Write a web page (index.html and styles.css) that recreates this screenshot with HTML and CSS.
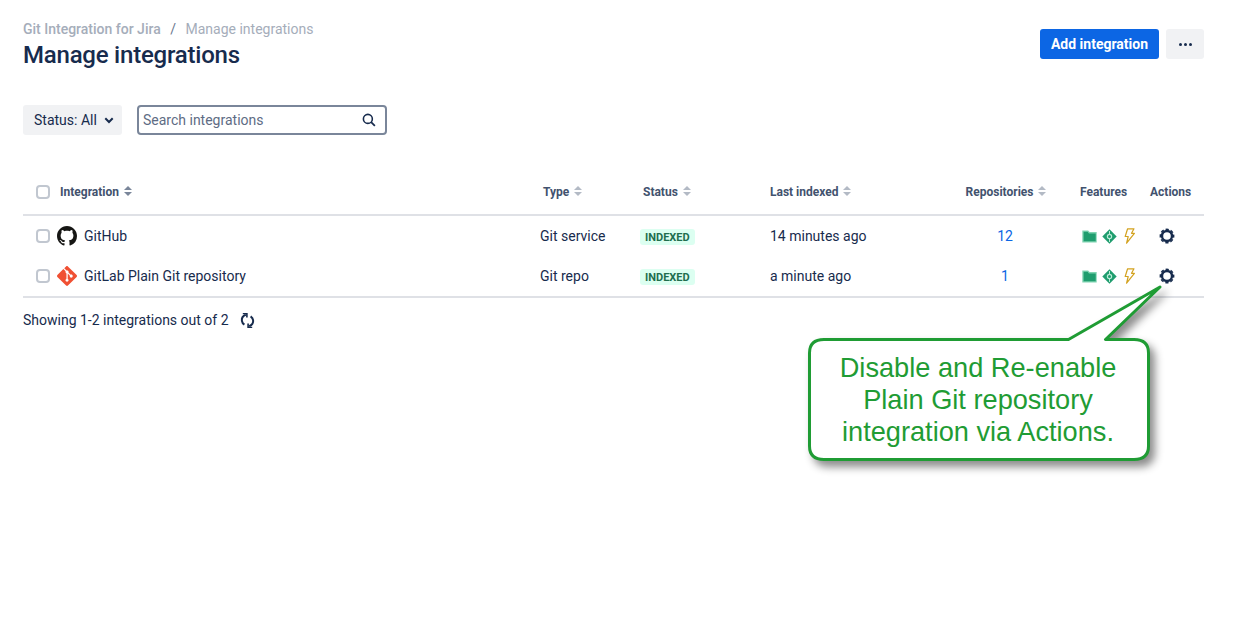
FILE: index.html
```html
<!DOCTYPE html>
<html lang="en">
<head>
    <meta charset="UTF-8">
    <meta name="viewport" content="width=device-width, initial-scale=1.0">
    <title>Manage integrations</title>
    <link rel="stylesheet" href="styles.css">
</head>
<body>

    <svg class="defs" width="0" height="0">
        <symbol id="sort" viewBox="0 0 8 10"><path d="M4 0l4 4H0zM0 6h8l-4 4z"/></symbol>
        <symbol id="folder" viewBox="0 0 15 13"><path d="M.3.500h5.900l1.400 1.600h7.100v10.500H.3z" fill="#7fd3b1"/><path d="M1.600 1.800h4l1.400 1.600h6.700v7.900H1.600z" fill="#1f9d6e"/></symbol>
        <symbol id="diamond" viewBox="0 0 15 15"><path d="M7.500.3l7.200 7.200-7.200 7.200L.3 7.500z" fill="#1f9d6e"/><circle cx="7.500" cy="7.500" r="2.100" fill="none" stroke="#b9ecd6" stroke-width="1.200"/><path d="M7.500 2v3M7.500 10v3" stroke="#b9ecd6"/></symbol>
        <symbol id="bolt" viewBox="0 0 11 16"><path d="M3.600.8h6.400L7.500 5.300h2.900L2.600 15.200l1.600-6.700H1.200z" fill="#fff" stroke="#d3a21f" stroke-width="1.200" stroke-linejoin="round"/></symbol>
        <symbol id="gear" viewBox="0 0 16 16"><circle cx="8" cy="8" r="5" fill="none" stroke="#172b4d" stroke-width="2.400"/><circle cx="8" cy="8" r="6.700" fill="none" stroke="#172b4d" stroke-width="1.400" stroke-dasharray="3.300 1.962" stroke-dashoffset="1.650"/></symbol>
    </svg>

    <main class="page">
        <header class="page-header">
            <div>
                <div class="breadcrumbs">
                    <span class="crumb-first">Git Integration for Jira</span>
                    <span class="crumb-sep">/</span>
                    <span>Manage integrations</span>
                </div>
                <h1>Manage integrations</h1>
            </div>
            <div class="page-actions">
                <button class="btn-primary">Add integration</button>
                <button class="btn-more" aria-label="More"><i></i><i></i><i></i></button>
            </div>
        </header>

        <div class="filters">
            <button class="btn-status">Status: All
                <svg width="10" height="7" viewBox="0 0 10 7"><path d="M1.300 1.300L5 5l3.700-3.700" fill="none" stroke="#172b4d" stroke-width="2"/></svg>
            </button>
            <div class="search">
                <span>Search integrations</span>
                <svg width="14" height="14" viewBox="0 0 15 15"><circle cx="6.300" cy="6.300" r="4.800" fill="none" stroke="#172b4d" stroke-width="1.700"/><path d="M9.800 9.800l4 4" stroke="#172b4d" stroke-width="1.900"/></svg>
            </div>
        </div>

        <table class="integrations">
            <colgroup>
                <col class="col-check"><col class="col-name"><col class="col-type"><col class="col-status">
                <col class="col-indexed"><col class="col-repos"><col class="col-features"><col class="col-actions">
            </colgroup>
            <thead>
                <tr>
                    <th class="cell-check"><span class="checkbox"></span></th>
                    <th>Integration <svg class="sort sort-active"><use href="#sort"/></svg></th>
                    <th>Type <svg class="sort"><use href="#sort"/></svg></th>
                    <th>Status <svg class="sort"><use href="#sort"/></svg></th>
                    <th>Last indexed <svg class="sort"><use href="#sort"/></svg></th>
                    <th class="center">Repositories <svg class="sort"><use href="#sort"/></svg></th>
                    <th>Features</th>
                    <th>Actions</th>
                </tr>
            </thead>
            <tbody>
                <tr>
                    <td class="cell-check"><span class="checkbox"></span></td>
                    <td><div class="name">
                        <svg width="20" height="20" viewBox="0 0 16 16"><path fill="#161614" d="M8 0C3.580 0 0 3.580 0 8c0 3.540 2.290 6.530 5.470 7.590.4.070.55-.17.55-.38 0-.19-.01-.82-.01-1.490-2.010.37-2.530-.49-2.690-.94-.09-.23-.48-.94-.82-1.130-.28-.15-.68-.52-.01-.53.63-.01 1.080.58 1.230.82.72 1.210 1.870.87 2.330.66.070-.52.28-.87.51-1.070-1.780-.2-3.640-.89-3.640-3.950 0-.87.31-1.590.82-2.150-.08-.2-.36-1.020.08-2.120 0 0 .67-.21 2.200.82.64-.18 1.320-.27 2-.27.68 0 1.360.09 2 .27 1.530-1.040 2.200-.82 2.200-.82.44 1.100.16 1.920.08 2.120.51.56.82 1.270.82 2.150 0 3.070-1.870 3.750-3.650 3.950.29.25.54.73.54 1.480 0 1.070-.01 1.930-.01 2.200 0 .21.15.46.55.38A8.013 8.013 0 0016 8c0-4.420-3.580-8-8-8z"/></svg>
                        GitHub</div></td>
                    <td>Git service</td>
                    <td><span class="lozenge">INDEXED</span></td>
                    <td class="cell-indexed">14 minutes ago</td>
                    <td class="center cell-repos"><a class="repo-link">12</a></td>
                    <td><div class="features"><svg class="ic-folder"><use href="#folder"/></svg><svg class="ic-diamond"><use href="#diamond"/></svg><svg class="ic-bolt"><use href="#bolt"/></svg></div></td>
                    <td class="cell-gear"><svg class="ic-gear"><use href="#gear"/></svg></td>
                </tr>
                <tr>
                    <td class="cell-check"><span class="checkbox"></span></td>
                    <td><div class="name">
                        <svg width="20" height="20" viewBox="0 0 24 24"><path fill="#f05033" d="M23.546 10.930L13.067.452c-.604-.603-1.582-.603-2.188 0L8.708 2.627l2.760 2.760c.645-.215 1.379-.07 1.889.441.516.515.658 1.258.438 1.900l2.658 2.660c.645-.223 1.387-.078 1.900.435.721.72.721 1.884 0 2.604-.719.719-1.881.719-2.600 0-.539-.541-.674-1.337-.404-1.996L12.860 8.955v6.525c.176.086.342.203.488.348.713.721.713 1.883 0 2.600-.719.721-1.889.721-2.609 0-.719-.719-.719-1.879 0-2.598.182-.18.387-.316.605-.406V8.835c-.217-.091-.424-.222-.6-.401-.545-.545-.676-1.342-.396-2.009L7.636 3.700.45 10.881c-.6.605-.6 1.584 0 2.189l10.480 10.477c.604.604 1.582.604 2.186 0l10.430-10.430c.605-.603.605-1.582 0-2.187"/></svg>
                        GitLab Plain Git repository</div></td>
                    <td>Git repo</td>
                    <td><span class="lozenge">INDEXED</span></td>
                    <td class="cell-indexed">a minute ago</td>
                    <td class="center cell-repos"><a class="repo-link">1</a></td>
                    <td><div class="features"><svg class="ic-folder"><use href="#folder"/></svg><svg class="ic-diamond"><use href="#diamond"/></svg><svg class="ic-bolt"><use href="#bolt"/></svg></div></td>
                    <td class="cell-gear"><svg class="ic-gear"><use href="#gear"/></svg></td>
                </tr>
            </tbody>
        </table>

        <div class="table-footer">
            <span>Showing 1-2 integrations out of 2</span>
            <svg width="15" height="15" viewBox="0 0 15 15" fill="none" stroke="#172b4d" stroke-width="2"><path d="M5.800 1.800C3 2.800 1.500 5 1.900 7.800c.2 1.600 1.100 3 2.500 3.900"/><path d="M2.800.5h4.100v4" stroke-width="1.600"/><path d="M9.200 13.200c2.800-1 4.300-3.200 3.900-6-.2-1.600-1.100-3-2.500-3.900"/><path d="M12.200 14.500H8.100v-4" stroke-width="1.600"/></svg>
        </div>
    </main>

    <div class="callout">
        <svg class="callout-shape" width="380" height="210" viewBox="0 0 380 210">
            <path d="M27 54.500H271.500L363 2L308.500 54.500H337Q351.500 54.500 351.500 68V161Q351.500 174.500 337 174.500H27Q12.500 174.500 12.500 161V68Q12.500 54.500 27 54.500Z" fill="#fff" stroke="#1f9c34" stroke-width="3" stroke-linejoin="round"/>
        </svg>
        <p>Disable and Re-enable<br>Plain Git repository<br>integration via Actions.</p>
    </div>

</body>
</html>
```

FILE: styles.css
```css
* {
    box-sizing: border-box;
}
body {
    font-family: Roboto, "Liberation Sans", sans-serif;
    font-size: 14px;
    margin: 0;
    background: #fff;
    color: #172b4d;
}
button {
    font-family: inherit;
    font-size: 14px;
    border: none;
}
.defs {
    position: absolute;
}
.page {
    padding: 19px 34px 0 23px;
}

/* header */
.page-header {
    display: flex;
    justify-content: space-between;
    align-items: flex-start;
}
.breadcrumbs {
    line-height: 20px;
    color: #a5adba;
}
.crumb-first {
    font-weight: 500;
}
.crumb-sep {
    margin: 0 6px;
    color: #6b778c;
}
h1 {
    margin: 0;
    font-size: 24px;
    font-weight: 500;
    letter-spacing: -0.22px;
    line-height: 32px;
}
.page-actions {
    display: flex;
    gap: 7px;
    margin-top: 10px;
}
.btn-primary {
    width: 119px;
    height: 30px;
    background: #0c66e4;
    color: #fff;
    font-weight: 700;
    border-radius: 3px;
}
.btn-more {
    display: flex;
    justify-content: center;
    align-items: center;
    gap: 2px;
    width: 38px;
    height: 30px;
    background: #f1f2f4;
    border-radius: 3px;
}
.btn-more i {
    width: 3px;
    height: 3px;
    border-radius: 50%;
    background: #172b4d;
}

/* filters */
.filters {
    display: flex;
    gap: 15px;
    margin-top: 34px;
}
.btn-status {
    display: flex;
    align-items: center;
    gap: 7px;
    width: 99px;
    height: 30px;
    padding: 0 0 0 11px;
    background: #f1f2f4;
    color: #172b4d;
    border-radius: 3px;
}
.search {
    display: flex;
    justify-content: space-between;
    align-items: center;
    width: 250px;
    height: 30px;
    padding: 0 9px 0 4px;
    border: 2px solid #7a869a;
    border-radius: 4px;
    color: #5e6c84;
}

/* table */
.integrations {
    width: 100%;
    margin-top: 34px;
    border-collapse: collapse;
    table-layout: fixed;
}
.col-check { width: 31px; }
.col-name { width: 483px; }
.col-type { width: 100px; }
.col-status { width: 127px; }
.col-indexed { width: 190px; }
.col-repos { width: 120px; }
.col-features { width: 70px; }
.col-actions { width: 60px; }

.integrations th {
    height: 46px;
    padding: 0 0 0 6px;
    text-align: left;
    font-size: 12px;
    font-weight: 700;
    color: #42526e;
    border-bottom: 2px solid #dfe1e6;
    white-space: nowrap;
}
.integrations td {
    height: 40px;
    padding: 0 0 0 3px;
}
.integrations tbody tr:last-child td {
    height: 42px;
    border-bottom: 2px solid #dfe1e6;
}
.integrations .cell-check {
    padding: 0 0 0 13px;
}
.integrations .center {
    text-align: center;
    padding: 0 16px 0 0;
}
.integrations .cell-repos {
    padding-right: 18px;
}
.integrations .cell-indexed {
    padding-left: 6px;
}
.checkbox {
    display: block;
    width: 14px;
    height: 14px;
    background: #fff;
    border: 2px solid #c1c7d0;
    border-radius: 4px;
}
.sort {
    width: 8px;
    height: 10px;
    margin-left: 2px;
    fill: #b3bac5;
}
.sort-active {
    fill: #7a869a;
}
.name {
    display: flex;
    align-items: center;
    gap: 7px;
}
.lozenge {
    display: inline-block;
    margin-top: 3px;
    padding: 0 5px;
    height: 16px;
    line-height: 17px;
    background: #dcfff1;
    color: #216e4e;
    font-size: 11px;
    font-weight: 700;
    border-radius: 3px;
    vertical-align: middle;
}
.repo-link {
    color: #0c66e4;
}
.features {
    display: flex;
    align-items: center;
    gap: 5px;
    padding-left: 5px;
}
.ic-folder { width: 15px; height: 13px; margin-top: 1px; }
.ic-diamond { width: 15px; height: 15px; margin-top: 1px; }
.ic-bolt { width: 11px; height: 16px; margin-left: 2px; }
.integrations .cell-gear {
    padding: 0 14px 0 0;
}
.ic-gear {
    display: block;
    width: 16px;
    height: 16px;
    margin: 0 auto;
}

.table-footer {
    display: flex;
    align-items: center;
    gap: 11px;
    margin-top: 12px;
    line-height: 20px;
}

/* annotation over the table */
.callout {
    position: absolute;
    left: 797px;
    top: 285px;
    width: 380px;
    height: 210px;
}
.callout-shape {
    position: absolute;
    left: 0;
    top: 0;
    filter: drop-shadow(5px 6px 4px rgba(0, 0, 0, 0.45));
}
.callout p {
    position: relative;
    width: 362px;
    margin: 66px 0 0 0;
    padding-top: 1px;
    text-align: center;
    font-family: "Liberation Sans", Arial, sans-serif;
    font-size: 27.2px;
    line-height: 32px;
    color: #1f9c34;
}
```
